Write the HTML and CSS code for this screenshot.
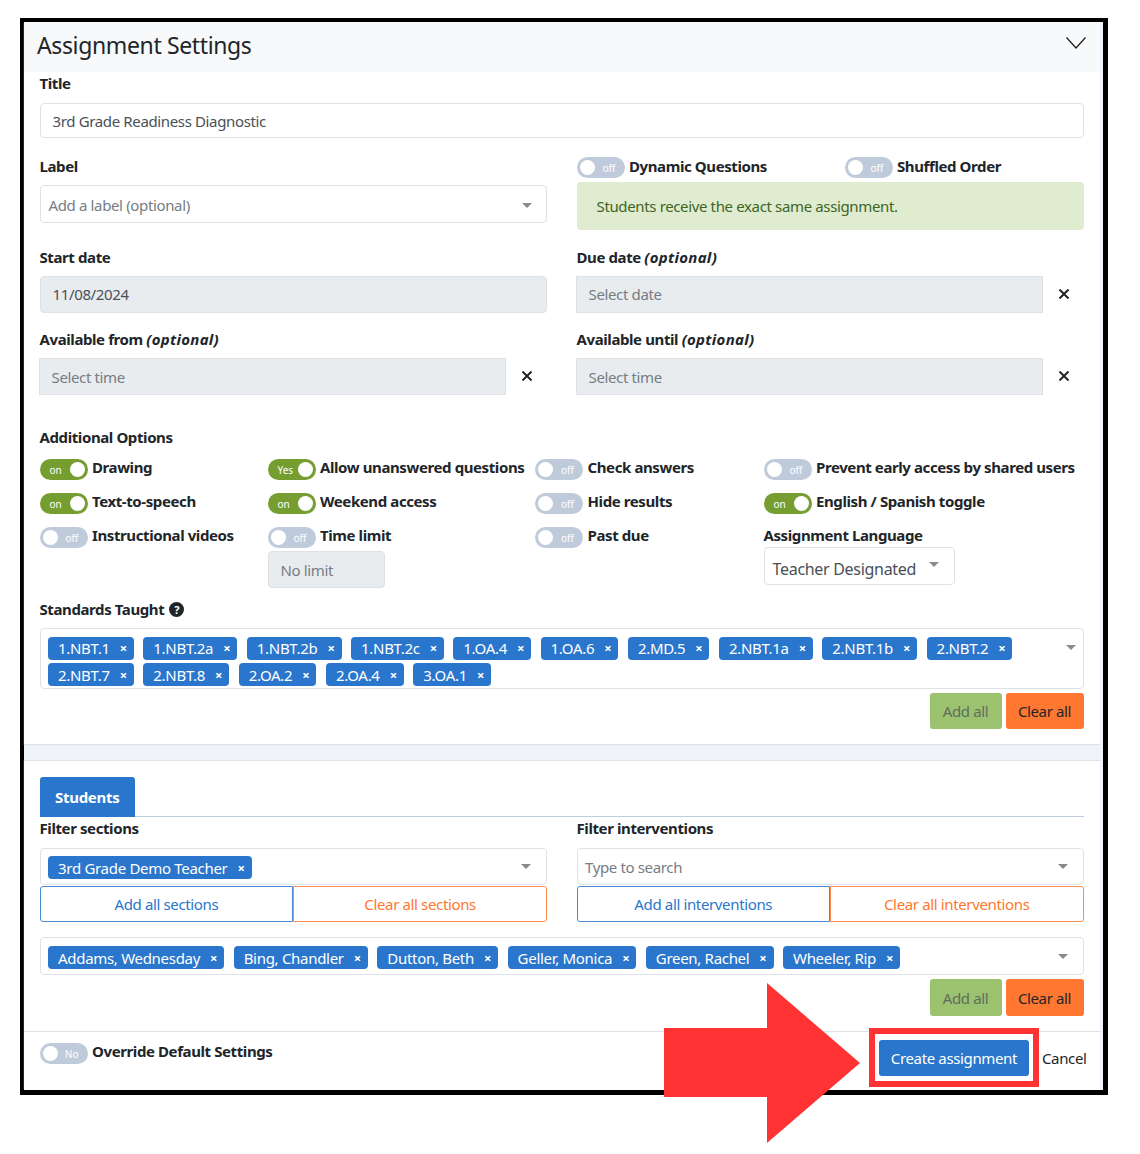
FILE: index.html
```html
<!DOCTYPE html>
<html lang="en">
<head>
<meta charset="utf-8">
<title>Assignment Settings</title>
<link rel="stylesheet" href="styles.css">
</head>
<body>
<main class="frame">
  <section class="card card-settings">
    <header class="card-head">
      <h1>Assignment Settings</h1>
      <svg class="chevron" viewBox="0 0 20 12" width="20" height="12"><polyline points="0.5,0.5 10,11 19.5,0.5"/></svg>
    </header>
    <div class="card-body">
      <label class="lbl">Title</label>
      <div class="field title-field">3rd Grade Readiness Diagnostic</div>

      <div class="cols row-label">
        <div>
          <label class="lbl label-lbl">Label</label>
          <div class="select label-select muted"><span>Add a label (optional)</span><i class="caret"></i></div>
        </div>
        <div>
          <div class="toggle-pair">
            <div class="opt opt-wide"><span class="toggle off"><b>off</b></span><span class="lbl">Dynamic Questions</span></div>
            <div class="opt"><span class="toggle off"><b>off</b></span><span class="lbl">Shuffled Order</span></div>
          </div>
          <div class="alert">Students receive the exact same assignment.</div>
        </div>
      </div>

      <div class="cols row-date">
        <div>
          <label class="lbl">Start date</label>
          <div class="field grey date-field">11/08/2024</div>
        </div>
        <div>
          <label class="lbl">Due date <em>(optional)</em></label>
          <div class="clearable">
            <div class="field grey square muted">Select date</div>
            <svg class="x" viewBox="0 0 10 10" width="10" height="10"><path d="M0.5 0.5L9.5 9.5M9.5 0.5L0.5 9.5"/></svg>
          </div>
        </div>
      </div>

      <div class="cols row-avail">
        <div>
          <label class="lbl">Available from <em>(optional)</em></label>
          <div class="clearable">
            <div class="field grey square muted">Select time</div>
            <svg class="x" viewBox="0 0 10 10" width="10" height="10"><path d="M0.5 0.5L9.5 9.5M9.5 0.5L0.5 9.5"/></svg>
          </div>
        </div>
        <div>
          <label class="lbl">Available until <em>(optional)</em></label>
          <div class="clearable">
            <div class="field grey square muted">Select time</div>
            <svg class="x" viewBox="0 0 10 10" width="10" height="10"><path d="M0.5 0.5L9.5 9.5M9.5 0.5L0.5 9.5"/></svg>
          </div>
        </div>
      </div>

      <label class="lbl options-head">Additional Options</label>
      <div class="options">
        <div class="opt-col">
          <div class="opt"><span class="toggle on"><b>on</b></span><span class="lbl">Drawing</span></div>
          <div class="opt"><span class="toggle on"><b>on</b></span><span class="lbl">Text-to-speech</span></div>
          <div class="opt"><span class="toggle off"><b>off</b></span><span class="lbl">Instructional videos</span></div>
        </div>
        <div class="opt-col">
          <div class="opt"><span class="toggle on"><b>Yes</b></span><span class="lbl">Allow unanswered questions</span></div>
          <div class="opt"><span class="toggle on"><b>on</b></span><span class="lbl">Weekend access</span></div>
          <div class="opt"><span class="toggle off"><b>off</b></span><span class="lbl">Time limit</span></div>
          <div class="field grey nolimit muted">No limit</div>
        </div>
        <div class="opt-col">
          <div class="opt"><span class="toggle off"><b>off</b></span><span class="lbl">Check answers</span></div>
          <div class="opt"><span class="toggle off"><b>off</b></span><span class="lbl">Hide results</span></div>
          <div class="opt"><span class="toggle off"><b>off</b></span><span class="lbl">Past due</span></div>
        </div>
        <div class="opt-col">
          <div class="opt"><span class="toggle off"><b>off</b></span><span class="lbl">Prevent early access by shared users</span></div>
          <div class="opt"><span class="toggle on"><b>on</b></span><span class="lbl">English / Spanish toggle</span></div>
          <label class="lbl lang-lbl">Assignment Language</label>
          <div class="select lang-select"><span>Teacher Designated</span><i class="caret"></i></div>
        </div>
      </div>

      <label class="lbl standards-head">Standards Taught <span class="help">?</span></label>
      <div class="multi standards">
        <div class="tags">
          <span class="tag">1.NBT.1<s>×</s></span>
          <span class="tag">1.NBT.2a<s>×</s></span>
          <span class="tag">1.NBT.2b<s>×</s></span>
          <span class="tag">1.NBT.2c<s>×</s></span>
          <span class="tag">1.OA.4<s>×</s></span>
          <span class="tag">1.OA.6<s>×</s></span>
          <span class="tag">2.MD.5<s>×</s></span>
          <span class="tag">2.NBT.1a<s>×</s></span>
          <span class="tag">2.NBT.1b<s>×</s></span>
          <span class="tag">2.NBT.2<s>×</s></span>
          <span class="tag">2.NBT.7<s>×</s></span>
          <span class="tag">2.NBT.8<s>×</s></span>
          <span class="tag">2.OA.2<s>×</s></span>
          <span class="tag">2.OA.4<s>×</s></span>
          <span class="tag">3.OA.1<s>×</s></span>
        </div>
        <i class="caret caret-top"></i>
      </div>
      <div class="bulk"><button class="btn-add">Add all</button><button class="btn-clear">Clear all</button></div>
    </div>
  </section>

  <section class="card card-students">
    <div class="card-body">
      <div class="tabs"><span class="tab">Students</span></div>
      <div class="cols row-filter">
        <div>
          <label class="lbl">Filter sections</label>
          <div class="multi filter-select">
            <div class="tags"><span class="tag">3rd Grade Demo Teacher<s>×</s></span></div>
            <i class="caret"></i>
          </div>
          <div class="split">
            <button class="split-add">Add all sections</button><button class="split-clear">Clear all sections</button>
          </div>
        </div>
        <div>
          <label class="lbl">Filter interventions</label>
          <div class="multi filter-select muted">
            <span class="placeholder">Type to search</span>
            <i class="caret"></i>
          </div>
          <div class="split">
            <button class="split-add">Add all interventions</button><button class="split-clear">Clear all interventions</button>
          </div>
        </div>
      </div>
      <div class="multi students">
        <div class="tags">
          <span class="tag">Addams, Wednesday<s>×</s></span>
          <span class="tag">Bing, Chandler<s>×</s></span>
          <span class="tag">Dutton, Beth<s>×</s></span>
          <span class="tag">Geller, Monica<s>×</s></span>
          <span class="tag">Green, Rachel<s>×</s></span>
          <span class="tag">Wheeler, Rip<s>×</s></span>
        </div>
        <i class="caret"></i>
      </div>
      <div class="bulk"><button class="btn-add">Add all</button><button class="btn-clear">Clear all</button></div>
    </div>
    <footer class="card-foot">
      <div class="opt foot-opt"><span class="toggle off"><b>No</b></span><span class="lbl">Override Default Settings</span></div>
      <div class="cta-ring"><button class="cta">Create assignment</button></div>
      <a class="cancel">Cancel</a>
    </footer>
  </section>
</main>
<svg class="arrow" viewBox="0 0 196 160" width="196" height="160"><polygon points="0,45 103,45 103,0 196,80 103,160 103,114 0,114"/></svg>
</body>
</html>
```
FILE: styles.css
```css
* { box-sizing: border-box; }
html, body { margin: 0; padding: 0; }
body {
  background: #fff;
  font-family: "Noto Sans", "Open Sans", sans-serif;
  font-size: 15px;
  line-height: 20px;
  letter-spacing: -0.36px;
  color: #212529;
  position: relative;
  height: 1154px;
  overflow: hidden;
}
.frame {
  width: 1088px;
  height: 1077px;
  margin: 18px 0 0 20px;
  border: solid #000;
  border-width: 4px 5px 5px 4px;
  background: #f0f3fa;
  padding-right: 3px;
}
.card { background: #fff; }
.card-settings { height: 722px; box-shadow: 0 1px 1px #dfe3e8; }
.card-students { margin-top: 17px; height: 329px; box-shadow: 0 -1px 1px #dfe3e8; }
.card-head {
  height: 50px;
  background: #f8f9fa;
  display: flex;
  justify-content: space-between;
  padding: 15px 14.5px 0 13px;
}
.card-head h1 {
  margin: -10px 0 0;
  font-size: 23px;
  line-height: 36px;
  font-weight: 400;
  letter-spacing: -0.37px;
  color: #212529;
}
.chevron { fill: none; stroke: #222; stroke-width: 1.3; }
.card-body { padding: 0 16.5px 0 15.5px; }
.card-settings .card-body { padding-top: 0.5px; }
.lbl { display: block; font-weight: 700; font-size: 15px; line-height: 20px; letter-spacing: -0.4px; color: #212529; }
.lbl em { font-style: italic; font-weight: 700; letter-spacing: 0.3px; }
.field {
  display: flex;
  align-items: center;
  border: 1px solid #dee2e6;
  border-radius: 4px;
  padding: 1px 12px 0;
  color: #495057;
  background: #fff;
}
.title-field { margin-top: 10px; height: 35.5px; }
.cols { display: grid; grid-template-columns: 507.5px 507px; column-gap: 29.5px; }
.row-label { margin-top: 18.5px; }
.row-date { margin-top: 17px; }
.row-avail { margin-top: 16px; }
.label-lbl { margin-top: -1px; }
.select {
  display: flex;
  align-items: center;
  justify-content: space-between;
  border: 1px solid #dee2e6;
  border-radius: 4px;
  background: #fff;
  color: #495057;
}
.muted { color: #757d85; }
.label-select { margin-top: 9px; height: 38px; padding: 3px 14.5px 0 8px; }
.caret {
  display: block;
  width: 0;
  height: 0;
  flex: none;
  border-left: 5px solid transparent;
  border-right: 5px solid transparent;
  border-top: 5px solid #8a8a8a;
}
.toggle-pair { display: flex; height: 21px; }
.toggle-pair .opt .lbl { margin-top: -3px; }
.opt { display: flex; align-items: center; height: 21px; gap: 4.5px; }
.opt .lbl { margin-top: -5px; white-space: nowrap; }
.opt-wide { width: 268px; }
.toggle {
  flex: none;
  position: relative;
  display: block;
  width: 48px;
  height: 21px;
  border-radius: 11px;
  font-size: 10px;
  line-height: 21px;
  letter-spacing: 0;
}
.toggle b { position: absolute; font-weight: 400; color: #fff; top: 1px; }
.toggle::after {
  content: "";
  position: absolute;
  top: 3px;
  width: 15px;
  height: 15px;
  border-radius: 50%;
  background: #fff;
}
.toggle.on { background: #759d2f; }
.toggle.on b { left: 10px; }
.toggle.on::after { right: 3px; }
.toggle.off { background: #bfcbdb; }
.toggle.off b { right: 9px; }
.toggle.off::after { left: 3px; }
.alert {
  margin-top: 4.5px;
  height: 48px;
  padding: 0 20px;
  display: flex;
  align-items: center;
  background: #dfecd0;
  border-radius: 4px;
  color: #3e6526;
}
.grey { background: #e9ecef; }
.date-field { margin-top: 9px; height: 36.5px; padding-top: 0; }
.clearable { margin-top: 9px; display: flex; align-items: center; margin-left: -1px; }
.square { width: 467px; height: 37px; border-radius: 0; flex: none; }
.x { margin-left: 16px; stroke: #212529; stroke-width: 2; fill: none; }
.row-date .square { height: 36.5px; padding-top: 0; }
.options-head { margin-top: 32px; }
.options {
  margin-top: 12px;
  display: grid;
  grid-template-columns: 228px 267.5px 228.5px 320px;
}
.opt-col { display: flex; flex-direction: column; }
.opt-col .opt + .opt { margin-top: 13px; }
.nolimit { margin-top: 3px; width: 117.5px; height: 37px; padding-top: 2px; }
.lang-lbl { margin-top: 11px; margin-bottom: 2px; }
.lang-select {
  width: 191px;
  height: 38px;
  padding: 0 15px 0 8px;
  font-size: 16px;
  letter-spacing: -0.3px;
}
.lang-select span { margin-top: 6px; }
.lang-select .caret { margin-top: -3px; }
.standards-head { margin-top: 11.5px; display: flex; align-items: center; gap: 5px; }
.help {
  width: 15px;
  height: 15px;
  border-radius: 50%;
  background: #212529;
  color: #fff;
  font-size: 11px;
  line-height: 15px;
  font-weight: 700;
  letter-spacing: 0;
  text-align: center;
}
.multi {
  display: flex;
  justify-content: space-between;
  border: 1px solid #dee2e6;
  border-radius: 4px;
  background: #fff;
}
.tags { display: flex; flex-wrap: wrap; gap: 2px 9.5px; }
.tag {
  display: flex;
  align-items: center;
  height: 23px;
  padding: 0 7px 0 10px;
  border-radius: 4px;
  background: #2a76cc;
  color: #fff;
  font-size: 15px;
  letter-spacing: -0.3px;
  white-space: nowrap;
}
.tag s { text-decoration: none; font-weight: 700; font-size: 13px; margin-left: 10px; }
.standards { margin-top: 8.5px; height: 61px; padding: 8px 7px 0 7.5px; }
.standards .tags { width: 985px; }
.caret-top { margin-top: 8px; }
.bulk { display: flex; justify-content: flex-end; gap: 4px; margin-top: 4px; }
button { font-family: inherit; font-size: 15px; line-height: 20px; letter-spacing: inherit; border: 0; padding: 0; }
.bulk button { height: 36px; border-radius: 3px; }
.btn-add { width: 72px; background: #9bc26e; color: #5f6e5c; }
.btn-clear { width: 78px; background: #ff7730; color: #212529; }
.tabs { padding-top: 16px; border-bottom: 1px solid #bfcde3; height: 56px; }
.tab {
  display: flex;
  align-items: center;
  justify-content: center;
  width: 95.5px;
  height: 40px;
  background: #2a76cc;
  color: #fff;
  font-weight: 700;
  letter-spacing: -0.3px;
  border-radius: 3px 3px 0 0;
}
.row-filter { margin-top: 1px; }
.filter-select { margin-top: 10px; height: 37px; padding: 7px 15px 0 7.5px; }
.filter-select .caret { margin-top: 8px; }
.placeholder { margin-top: 1px; }
.split { display: flex; margin-top: 1px; height: 36px; }
.split button { width: 50%; background: #fff; }
.split-add { border: 1px solid #4a8ad4; color: #2a76cc; border-radius: 3px 0 0 3px; }
.split-clear { border: 1px solid #ff8a4d; color: #ff7730; border-radius: 0 3px 3px 0; }
.students { margin-top: 15px; height: 38px; padding: 8px 15px 0 7.5px; }
.students .caret { margin-top: 8px; }
.card-students .bulk { margin-top: 4px; }
.card-students .bulk button { height: 37px; }
.card-foot {
  margin-top: 15px;
  border-top: 1px solid #dee2e6;
  display: flex;
  align-items: flex-start;
  padding: 0 13.5px 0 15.5px;
}
.foot-opt { margin-top: 11px; margin-right: auto; }
.cta-ring {
  margin-top: -4.5px;
  border: 6px solid #ff3333;
  background: #fff;
  padding: 6px 4px 5px;
}
.cta { display: block; width: 150px; height: 36px; background: #2a76cc; color: #fff; border-radius: 3px; }
.cancel { margin: 15.5px 0 0 3px; color: #212529; }
.arrow { position: absolute; left: 664px; top: 983px; fill: #ff3333; }
```
